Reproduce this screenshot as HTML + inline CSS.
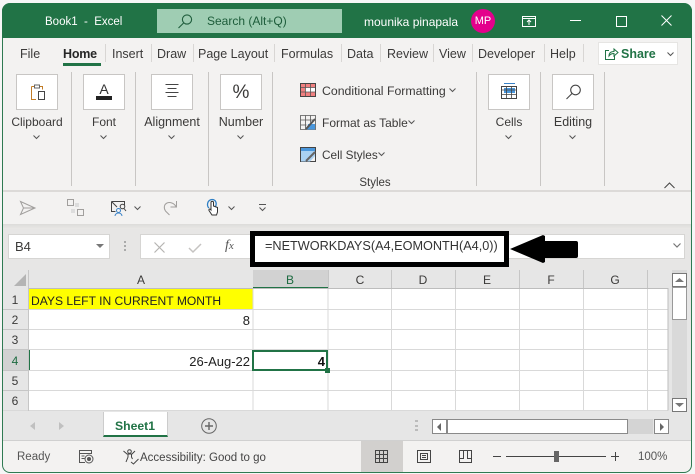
<!DOCTYPE html>
<html><head><meta charset="utf-8"><style>
html,body{margin:0;padding:0;width:695px;height:474px;overflow:hidden;background:#f6f6f6}
body{position:relative;font-family:"Liberation Sans",sans-serif;color:#333}
.a{position:absolute}
.t{position:absolute;white-space:nowrap;line-height:16px;font-size:12.500px;color:#3b3a39}
.c{text-align:center;transform:translateX(-50%)}
.r{transform:translateX(-100%)}
.sep{position:absolute;width:1px;background:#c8c6c4}
.box{position:absolute;background:#fff;border:1px solid #c8c6c4;box-sizing:border-box;width:42px;height:36px;top:74px}
svg{position:absolute;overflow:visible}
</style></head><body>
<!-- window -->
<div class="a" style="left:2px;top:3px;width:690px;height:470px;background:#f3f2f1;border-radius:8px;box-sizing:border-box;border:1.5px solid #2f7a52;border-top:0"></div>
<div class="a" style="left:2px;top:3px;width:690px;height:35px;background:#217346;border-radius:8px 8px 0 0"></div>
<div class="t" style="left:45px;top:14px;color:#fff;font-size:11.500px">Book1&nbsp; -&nbsp; Excel</div>
<div class="a" style="left:157px;top:9px;width:185px;height:24px;background:#9fcdb3"></div>
<svg style="left:176px;top:13px" width="18" height="16" fill="none" stroke="#1f5d3c" stroke-width="1.1"><circle cx="11" cy="6.5" r="4.6"/><path d="M7.6 10 2.5 15"/></svg>
<div class="t" style="left:207px;top:13px;color:#1d5c3a;font-size:12px">Search (Alt+Q)</div>
<div class="t" style="left:364px;top:14px;color:#fff;font-size:12px">mounika pinapala</div>
<div class="a" style="left:471px;top:9px;width:24px;height:24px;border-radius:50%;background:#e3008c"></div>
<div class="t c" style="left:483px;top:13px;color:#fff;font-size:11px">MP</div>
<svg style="left:522px;top:14px" width="16" height="14" fill="none" stroke="#fff"><path d="M.5 2.500h13v10H.500zM.5 4.500h13M7 11V6M5 8l2-2 2 2"/></svg>
<div class="a" style="left:570px;top:20px;width:11px;height:1px;background:#fff"></div>
<div class="a" style="left:616px;top:16px;width:9px;height:9px;border:1px solid #fff"></div>
<svg style="left:661px;top:15px" width="11" height="11" stroke="#fff" fill="none"><path d="M.5.500l10 10M10.500.500l-10 10"/></svg>

<!-- tabs -->
<div class="t" style="left:20px;top:46px">File</div>
<div class="t" style="left:63px;top:46px;color:#262626;font-weight:bold;font-size:12.500px;letter-spacing:-.2px">Home</div>
<div class="a" style="left:63px;top:63px;width:38px;height:3px;background:#217346"></div>
<div class="t" style="left:112px;top:46px">Insert</div>
<div class="t" style="left:157px;top:46px">Draw</div>
<div class="t" style="left:198px;top:46px">Page Layout</div>
<div class="t" style="left:281px;top:46px">Formulas</div>
<div class="t" style="left:347px;top:46px">Data</div>
<div class="t" style="left:387px;top:46px">Review</div>
<div class="t" style="left:439px;top:46px">View</div>
<div class="t" style="left:478px;top:46px">Developer</div>
<div class="t" style="left:550px;top:46px">Help</div>
<div class="sep" style="left:105px;top:44px;height:18px;background:#d8d6d4"></div>
<div class="sep" style="left:151px;top:44px;height:18px;background:#d8d6d4"></div>
<div class="sep" style="left:193px;top:44px;height:18px;background:#d8d6d4"></div>
<div class="sep" style="left:274px;top:44px;height:18px;background:#d8d6d4"></div>
<div class="sep" style="left:341px;top:44px;height:18px;background:#d8d6d4"></div>
<div class="sep" style="left:380px;top:44px;height:18px;background:#d8d6d4"></div>
<div class="sep" style="left:433px;top:44px;height:18px;background:#d8d6d4"></div>
<div class="sep" style="left:472px;top:44px;height:18px;background:#d8d6d4"></div>
<div class="sep" style="left:544px;top:44px;height:18px;background:#d8d6d4"></div>
<div class="sep" style="left:583px;top:44px;height:18px;background:#d8d6d4"></div>
<div class="a" style="left:598px;top:42px;width:80px;height:23px;background:#fff;border:1px solid #e6e5e3;box-sizing:border-box"></div>
<svg style="left:604px;top:47px" width="15" height="14" fill="none" stroke="#217346"><path d="M5 3.500H1.500v9h9V9M5 9c0-3 2-4.500 5-4.500V2l4 3.500L10 9V6.500C8 6.500 6 7.500 5 9z"/></svg>
<div class="t" style="left:621px;top:46px;color:#217346;font-weight:bold;font-size:12.500px">Share</div>
<svg style="left:667px;top:52px" width="7" height="5" fill="none" stroke="#555"><path d="M.5.500 3.500 3.500 6.500.500"/></svg>

<!-- ribbon -->
<div class="box" style="left:16px"></div><div class="box" style="left:83px"></div><div class="box" style="left:151px"></div><div class="box" style="left:220px"></div><div class="box" style="left:488px"></div><div class="box" style="left:552px"></div>
<svg style="left:31px;top:84px" width="15" height="16" fill="none"><path d="M.5 2.500h11v3M5 15.500H.5v-13" stroke="#c27c26"/><rect x="3.500" y="1" width="5" height="3" fill="#fff" stroke="#666"/><rect x="7.500" y="7.500" width="6" height="8" fill="#fff" stroke="#444"/></svg>
<div class="t c" style="left:104px;top:81px;font-size:14px;color:#333">A</div>
<div class="a" style="left:96px;top:96px;width:16px;height:4px;background:#222"></div>
<svg style="left:165px;top:84px" width="14" height="14" stroke="#444"><path d="M.5.500h13M2.500 4.500h9M.5 8.500h13M2.500 12.500h9"/></svg>
<div class="t c" style="left:241px;top:83px;font-size:19px;line-height:20px;color:#3b3a39">%</div>
<svg style="left:501px;top:83px" width="17" height="17" fill="none"><path d="M3 .500h11" stroke="#3a82c7"/><path d="M.5 3.500h15v12H.5z" stroke="#444"/><rect x="3" y="5" width="11" height="5" fill="#4a97dc"/><path d="M.5 7h15M.5 11.500h15M5.500 3.500v12M10.500 3.500v12" stroke="#444" stroke-width=".8"/></svg>
<svg style="left:565px;top:84px" width="17" height="16" fill="none" stroke="#444" stroke-width="1.1"><circle cx="10.500" cy="6" r="4.800"/><path d="M7 9.500 1.500 15"/></svg>
<div class="t c" style="left:37px;top:114px;font-size:12px">Clipboard</div>
<div class="t c" style="left:104px;top:114px;font-size:12px">Font</div>
<div class="t c" style="left:172px;top:114px;font-size:12.500px">Alignment</div>
<div class="t c" style="left:241px;top:114px;font-size:12.500px">Number</div>
<div class="t c" style="left:509px;top:114px;font-size:12px">Cells</div>
<div class="t c" style="left:573px;top:114px;font-size:12.500px">Editing</div>
<svg style="left:33px;top:135px" width="7" height="5" fill="none" stroke="#555"><path d="M.5.500 3.500 3.500 6.500.500"/></svg>
<svg style="left:100px;top:135px" width="7" height="5" fill="none" stroke="#555"><path d="M.5.500 3.500 3.500 6.500.500"/></svg>
<svg style="left:168px;top:135px" width="7" height="5" fill="none" stroke="#555"><path d="M.5.500 3.500 3.500 6.500.500"/></svg>
<svg style="left:237px;top:135px" width="7" height="5" fill="none" stroke="#555"><path d="M.5.500 3.500 3.500 6.500.500"/></svg>
<svg style="left:505px;top:135px" width="7" height="5" fill="none" stroke="#555"><path d="M.5.500 3.500 3.500 6.500.500"/></svg>
<svg style="left:569px;top:135px" width="7" height="5" fill="none" stroke="#555"><path d="M.5.500 3.500 3.500 6.500.500"/></svg>
<div class="sep" style="left:71px;top:72px;height:114px"></div>
<div class="sep" style="left:135px;top:72px;height:114px"></div>
<div class="sep" style="left:208px;top:72px;height:114px"></div>
<div class="sep" style="left:272px;top:72px;height:114px"></div>
<div class="sep" style="left:476px;top:72px;height:114px"></div>
<div class="sep" style="left:540px;top:72px;height:114px"></div>
<div class="sep" style="left:604px;top:72px;height:114px"></div>
<!-- styles -->
<svg style="left:300px;top:83px" width="16" height="14"><rect x=".5" y=".5" width="15" height="13" fill="#fff" stroke="#444"/><rect x="1" y="1" width="14" height="3.500" fill="#f08080"/><rect x="1" y="9" width="14" height="4" fill="#f08080"/><rect x="1" y="4" width="4" height="5" fill="#f08080"/><path d="M5.500 1v12M10.500 1v12M1 4.500h14M1 9h14" stroke="#555" stroke-width=".8"/></svg>
<div class="t" style="left:322px;top:83px;font-size:12.300px">Conditional Formatting</div>
<svg style="left:449px;top:88px" width="7" height="5" fill="none" stroke="#555"><path d="M.5.500 3.500 3.500 6.500.500"/></svg>
<svg style="left:300px;top:115px" width="17" height="15" fill="none"><path d="M.5.500h15v14H.5zM5.500.5v14M10.500.5v7M.5 5h15M.5 10h6" stroke="#555" stroke-width=".8"/><path d="M8 9h7v5.500H7z" fill="#4a97dc"/><path d="M6 14 15 4" stroke="#555" stroke-width="2"/></svg>
<div class="t" style="left:322px;top:115px;font-size:12px">Format as Table</div>
<svg style="left:408px;top:120px" width="7" height="5" fill="none" stroke="#555"><path d="M.5.500 3.500 3.500 6.500.500"/></svg>
<svg style="left:300px;top:147px" width="17" height="15" fill="none"><rect x=".5" y=".5" width="15" height="14" stroke="#444"/><path d="M1 1h14v3H1z" fill="#4a97dc"/><path d="M1 4h14v5l-5 5.500H1z" fill="#a9d1f2"/><path d="M6 14 15 5" stroke="#666" stroke-width="2"/></svg>
<div class="t" style="left:322px;top:147px;font-size:11.800px">Cell Styles</div>
<svg style="left:378px;top:152px" width="7" height="5" fill="none" stroke="#555"><path d="M.5.500 3.500 3.500 6.500.500"/></svg>
<div class="t c" style="left:375px;top:175px;font-size:11.500px">Styles</div>
<svg style="left:664px;top:182px" width="11" height="7" fill="none" stroke="#444"><path d="M.5 6 5.500 1l5 5"/></svg>
<!-- quick access -->
<div class="a" style="left:3px;top:190px;width:688px;height:2px;background:#dcdad8"></div>
<svg style="left:20px;top:200px" width="16" height="16" fill="none" stroke="#a19f9d"><path d="M.5 1.500 15 8 .5 14.500 3.500 8zM3.500 8H15"/></svg>
<svg style="left:67px;top:199px" width="17" height="17" fill="none" stroke="#a19f9d"><rect x=".5" y=".5" width="6" height="6"/><rect x="10.500" y="10.500" width="6" height="6"/><rect x="8" y="4" width="4" height="4" fill="#ddd" stroke="none"/><rect x="4" y="10" width="4" height="4" fill="#ddd" stroke="none"/></svg>
<svg style="left:111px;top:201px" width="17" height="16" fill="none"><path d="M.5.500h13v4M.5.500v10h4M.5.500 6 6" stroke="#444"/><circle cx="11.500" cy="5.500" r="2.300" stroke="#444"/><path d="m13 7.500 2 2.500" stroke="#444"/><circle cx="7.500" cy="9.500" r="2" stroke="#3a82c7"/><path d="M4 15c0-2 2-3 3.500-3s3.500 1 3.500 3" stroke="#3a82c7"/></svg>
<svg style="left:134px;top:206px" width="7" height="5" fill="none" stroke="#555"><path d="M.5.500 3.500 3.500 6.500.500"/></svg>
<svg style="left:163px;top:200px" width="15" height="16" fill="none" stroke="#a19f9d"><path d="M13.500 1v6h-6M13 6.500C11 3 7 1.800 4 3 1 4.500.5 8 2.500 11l4 4"/></svg>
<svg style="left:206px;top:198px" width="15" height="18" fill="none"><path d="M3 10C.500 8 1 2 6 1.500c4 0 5 4 3.500 7" stroke="#2f7fc4" stroke-width="1.300"/><path d="M5 8V4.500c0-1.500 2.500-1.500 2.500 0V8l4 1.500V14l-1 3H6l-3-4.500c-.500-1 .5-2 1.500-1L5 12z" fill="#fff" stroke="#333"/></svg>
<svg style="left:228px;top:206px" width="7" height="5" fill="none" stroke="#555"><path d="M.5.500 3.500 3.500 6.500.500"/></svg>
<svg style="left:259px;top:204px" width="7" height="7" fill="none" stroke="#555"><path d="M0 .500h7M.5 3.500 3.500 6.500 6.500 3.500"/></svg>
<div class="a" style="left:3px;top:224px;width:688px;height:5px;background:linear-gradient(#dddcda,#e9e8e6)"></div>
<div class="a" style="left:3px;top:229px;width:688px;height:41px;background:#e7e6e5"></div>
<!-- name box/formula -->
<div class="a" style="left:8px;top:234px;width:102px;height:25px;background:#fff;border:1px solid #d6d5d3;box-sizing:border-box"></div>
<div class="t" style="left:15px;top:239px;font-size:13px">B4</div>
<svg style="left:96px;top:244px" width="8" height="4"><path d="M0 0h8L4 4z" fill="#777"/></svg>
<svg style="left:124px;top:241px" width="3" height="12" fill="#aaa"><rect width="2" height="2"/><rect y="4" width="2" height="2"/><rect y="8" width="2" height="2"/></svg>
<div class="a" style="left:140px;top:234px;width:545px;height:25px;background:#fff;border:1px solid #d6d5d3;box-sizing:border-box"></div>
<svg style="left:154px;top:242px" width="11" height="11" fill="none" stroke="#b5b3b1" stroke-width="1.200"><path d="M.5.500l10 10M10.500.500l-10 10"/></svg>
<svg style="left:188px;top:243px" width="14" height="11" fill="none" stroke="#c5c3c1" stroke-width="1.500"><path d="M1 5l4 4 8-8"/></svg>
<div class="t" style="left:225px;top:238px;font-family:'Liberation Serif',serif;font-style:italic;font-size:14px;color:#555">f<span style="font-size:11px">x</span></div>
<svg style="left:673px;top:243px" width="8" height="5" fill="none" stroke="#777" stroke-width="1.200"><path d="M.5.500 4 4 7.500.500"/></svg>
<div class="a" style="left:250px;top:231px;width:259px;height:36px;border:5px solid #000;box-sizing:border-box;background:#fff"></div>
<div class="t" style="left:265px;top:238px;color:#333;font-size:12.700px">=NETWORKDAYS(A4,EOMONTH(A4,0))</div>
<svg style="left:509px;top:234px" width="70" height="30"><path d="M1 15 34 1l2 1v5h31q2 0 2 2v13q0 2-2 2H36v4l-2 1z" fill="#000"/></svg>
<!-- grid -->
<div class="a" style="left:3px;top:270px;width:688px;height:142px;background:#e6e6e6"></div>
<div class="a" style="left:29px;top:289px;width:639px;height:122px;background:#fff"></div>
<div class="a" style="left:29px;top:289px;width:224px;height:20px;background:#ffff00"></div>
<div class="a" style="left:253px;top:270px;width:75px;height:19px;background:#d2d2d2"></div>
<div class="a" style="left:253px;top:287px;width:75px;height:2px;background:#217346"></div>
<div class="a" style="left:3px;top:350px;width:26px;height:20px;background:#d2d2d2"></div>
<div class="a" style="left:28px;top:350px;width:1.500px;height:20px;background:#217346"></div>
<svg style="left:14px;top:274px" width="12" height="12"><path d="M12 0v12H0z" fill="#b4b4b4"/></svg>
<svg class="a" style="left:3px;top:270px" width="665" height="142" fill="none" stroke="#d9d9d9"><path d="M250 19v122M325 19v122M388.500 19v122M452.500 19v122M516.500 19v122M580.500 19v122M644.500 19v122M26 39.500h639M26 59.500h639M26 79.500h639M26 100.500h639M26 120.500h639M0 140.500h665"/><path d="M25.500 0v141M325.500 0v19M388.500 0v19M452.500 0v19M516.500 0v19M580.500 0v19M644.500 0v19M0 39.500h26M0 59.500h26M0 79.500h26M0 100.500h26M0 120.500h26" stroke="#c6c6c6"/><path d="M26 18.500h639v122" stroke="#bdbdbd"/></svg>
<div class="t c" style="left:141px;top:272px;font-size:12px">A</div>
<div class="t c" style="left:290px;top:272px;font-size:12px;color:#1e6b41">B</div>
<div class="t c" style="left:360px;top:272px;font-size:12px">C</div>
<div class="t c" style="left:423px;top:272px;font-size:12px">D</div>
<div class="t c" style="left:487px;top:272px;font-size:12px">E</div>
<div class="t c" style="left:551px;top:272px;font-size:12px">F</div>
<div class="t c" style="left:615px;top:272px;font-size:12px">G</div>
<div class="t c" style="left:15px;top:292px;font-size:12px">1</div>
<div class="t c" style="left:15px;top:312px;font-size:12px">2</div>
<div class="t c" style="left:15px;top:332px;font-size:12px">3</div>
<div class="t c" style="left:15px;top:353px;font-size:12px;color:#1e6b41">4</div>
<div class="t c" style="left:15px;top:373px;font-size:12px">5</div>
<div class="t c" style="left:15px;top:393px;font-size:12px">6</div>
<div class="t" style="left:31px;top:293px;color:#222;font-size:12.100px">DAYS LEFT IN CURRENT MONTH</div>
<div class="t r" style="left:250px;top:313px;color:#222;font-size:13px">8</div>
<div class="t r" style="left:250px;top:354px;color:#222;font-size:13px">26-Aug-22</div>
<div class="a" style="left:252px;top:350px;width:76px;height:21px;border:2px solid #217346;box-sizing:border-box"></div>
<div class="a" style="left:325px;top:368px;width:5px;height:5px;background:#217346;border:0 solid #fff"></div>
<div class="t r" style="left:325px;top:354px;color:#111;font-weight:bold;font-size:13px">4</div>
<!-- v scrollbar -->
<div class="a" style="left:672px;top:270px;width:15px;height:142px;background:#d9d9d9"></div>
<div class="a" style="left:672px;top:273px;width:15px;height:14px;background:#fff;border:1px solid #777;box-sizing:border-box"></div>
<svg style="left:675px;top:278px" width="9" height="4"><path d="M0 4h9L4.500 0z" fill="#777"/></svg>
<div class="a" style="left:672px;top:287px;width:15px;height:33px;background:#fff;border:1px solid #999;box-sizing:border-box"></div>
<div class="a" style="left:672px;top:398px;width:15px;height:14px;background:#fff;border:1px solid #777;box-sizing:border-box"></div>
<svg style="left:675px;top:403px" width="9" height="4"><path d="M0 0h9L4.500 4z" fill="#777"/></svg>
<!-- sheet bar -->
<div class="a" style="left:3px;top:412px;width:688px;height:29px;background:#e6e6e6;border-bottom:1px solid #d0d0d0;box-sizing:border-box"></div>
<svg style="left:30px;top:422px" width="5" height="8"><path d="M5 0v8L0 4z" fill="#c0c0c0"/></svg>
<svg style="left:59px;top:422px" width="5" height="8"><path d="M0 0v8l5-4z" fill="#c0c0c0"/></svg>
<div class="a" style="left:103px;top:412px;width:65px;height:25px;background:#fff;border-bottom:2px solid #217346;border-left:1px solid #ccc;border-right:1px solid #ccc;box-sizing:border-box"></div>
<div class="t c" style="left:135px;top:418px;color:#217346;font-weight:bold;font-size:12.200px">Sheet1</div>
<svg style="left:201px;top:418px" width="16" height="16" fill="none" stroke="#666"><circle cx="8" cy="8" r="7.300"/><path d="M8 4v8M4 8h8" stroke-width="1.400"/></svg>
<svg style="left:415px;top:420px" width="3" height="12" fill="#bbb"><rect width="3" height="2"/><rect y="5" width="3" height="2"/><rect y="9" width="3" height="2"/></svg>
<div class="a" style="left:432px;top:419px;width:15px;height:15px;background:#fff;border:1px solid #888;box-sizing:border-box"></div>
<svg style="left:437px;top:423px" width="4" height="8"><path d="M4 0v8L0 4z" fill="#666"/></svg>
<div class="a" style="left:447px;top:419px;width:181px;height:15px;background:#fff;border:1px solid #8a8a8a;box-sizing:border-box"></div>
<div class="a" style="left:628px;top:419px;width:25px;height:15px;background:#d4d4d4"></div>
<div class="a" style="left:654px;top:419px;width:15px;height:15px;background:#fff;border:1px solid #888;box-sizing:border-box"></div>
<svg style="left:660px;top:423px" width="4" height="8"><path d="M0 0v8l4-4z" fill="#666"/></svg>
<!-- status -->
<div class="t" style="left:17px;top:449px;font-size:11.500px;color:#555">Ready</div>
<svg style="left:79px;top:450px" width="15" height="14" fill="none" stroke="#555"><path d="M.5.500h12v3H.5zM.5 3.500v9H6M2.500 6h3M2.500 8.500h3"/><circle cx="10" cy="9" r="4" fill="#f3f2f1"/><circle cx="10" cy="9" r="1.500" fill="#555"/></svg>
<svg style="left:123px;top:449px" width="16" height="16" fill="none" stroke="#444"><circle cx="6.500" cy="2.500" r="1.800"/><path d="M.5 2 4 5h5l3-3M5 5v3l-2 5M8.500 5v3l1 2M8 13l2.500 2 5-5"/></svg>
<div class="t" style="left:140px;top:450px;font-size:11.500px;color:#444">Accessibility: Good to go</div>
<div class="a" style="left:361px;top:441px;width:42px;height:31px;background:#d2d0ce"></div>
<svg style="left:375px;top:450px" width="13" height="13" fill="none" stroke="#444"><path d="M.5.500h12v12H.5zM4.500.5v12M8.500.5v12M.5 4.500h12M.5 8.500h12"/></svg>
<svg style="left:417px;top:450px" width="14" height="13" fill="none" stroke="#444"><path d="M.5.500h13v12H.5zM3.500 3.500h7v6h-7zM5 5.500h4M5 7.500h4"/></svg>
<svg style="left:459px;top:450px" width="14" height="13" fill="none" stroke="#444"><path d="M.5.500h12v12H.5zM.5 8.500h4v-8M8.500.5v8h4"/></svg>
<div class="a" style="left:493px;top:456px;width:8px;height:1px;background:#444"></div>
<div class="a" style="left:506px;top:456px;width:100px;height:1px;background:#444"></div>
<div class="a" style="left:554px;top:451px;width:5px;height:11px;background:#666"></div>
<div class="a" style="left:611px;top:456px;width:8px;height:1px;background:#444"></div><div class="a" style="left:615px;top:452px;width:1px;height:9px;background:#444"></div>
<div class="t" style="left:638px;top:449px;font-size:11.500px;color:#555">100%</div>
</body></html>
